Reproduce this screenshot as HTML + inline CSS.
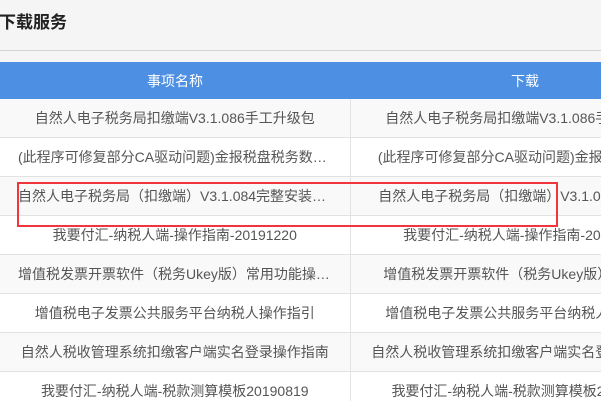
<!DOCTYPE html><html><head><meta charset="utf-8"><style>
html,body{margin:0;width:601px;height:401px;overflow:hidden}
body{background:#f5f5f5;font-family:"Liberation Sans","Noto Sans CJK SC",sans-serif;position:relative}
.t{position:absolute;left:-1px;top:8px;font-size:17px;font-weight:bold;color:#222}
.line{position:absolute;left:0;top:50px;width:601px;height:1px;background:#d4d4d4}
.wrap{position:absolute;left:0;top:62px;width:601px;height:339px;overflow:hidden}
table{border-collapse:collapse;table-layout:fixed;width:700px}
th{background:#4d8fe2;color:#fff;font-weight:normal;font-size:14px;height:37px;padding:0}
td{height:38px;border-bottom:1px solid #e2e2e2;font-size:14px;color:#555;text-align:center;padding:0 18px;white-space:nowrap;overflow:hidden;text-overflow:ellipsis}
td+td{border-left:1px solid #e2e2e2;text-overflow:clip;padding:0}
tr:nth-child(odd) td{background:#f9f9f9}
tr:nth-child(even) td{background:#fff}
.r{position:absolute;left:17px;top:182px;width:537px;height:41px;border:2.5px solid #f0353b}
</style></head><body>
<div class="t">下载服务</div><div class="line"></div>
<div class="wrap"><table><colgroup><col style="width:350px"><col style="width:350px"></colgroup>
<thead><tr><th>事项名称</th><th>下载</th></tr></thead><tbody>
<tr><td>自然人电子税务局扣缴端V3.1.086手工升级包</td><td>自然人电子税务局扣缴端V3.1.086手工升级包</td></tr>
<tr><td>(此程序可修复部分CA驱动问题)金报税盘税务数据采集工具</td><td>(此程序可修复部分CA驱动问题)金报税盘税务数</td></tr>
<tr><td>自然人电子税务局（扣缴端）V3.1.084完整安装包下载</td><td>自然人电子税务局（扣缴端）V3.1.084完整安装</td></tr>
<tr><td>我要付汇-纳税人端-操作指南-20191220</td><td>我要付汇-纳税人端-操作指南-20191220</td></tr>
<tr><td>增值税发票开票软件（税务Ukey版）常用功能操作指引</td><td>增值税发票开票软件（税务Ukey版）常用功能</td></tr>
<tr><td>增值税电子发票公共服务平台纳税人操作指引</td><td>增值税电子发票公共服务平台纳税人操作指引</td></tr>
<tr><td>自然人税收管理系统扣缴客户端实名登录操作指南</td><td>自然人税收管理系统扣缴客户端实名登录操作指南</td></tr>
<tr><td>我要付汇-纳税人端-税款测算模板20190819</td><td>我要付汇-纳税人端-税款测算模板20190819</td></tr>
</tbody></table></div>
<div class="r"></div>
</body></html>
